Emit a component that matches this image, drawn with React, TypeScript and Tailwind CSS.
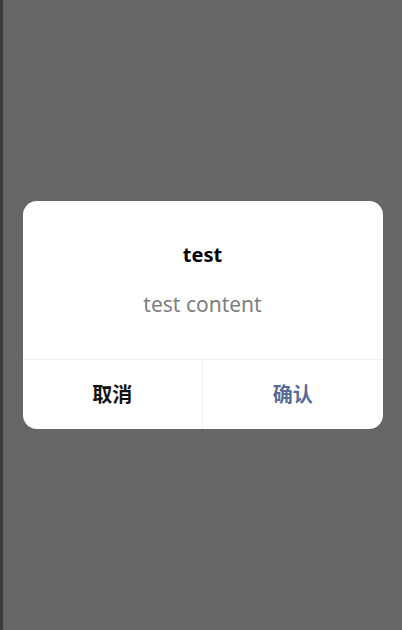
export default function App() {
  return (
    <div
      className="h-[630px] w-full flex items-center justify-center bg-[#666666] border-l-[3px] border-[#3a3a3a]"
      style={{ fontFamily: '"Noto Sans", "Noto Sans CJK SC", sans-serif' }}
    >
      <div className="w-[360px] bg-white rounded-[14px] overflow-hidden">
        {/* Body */}
        <div className="pt-[40px] pb-[40px] px-6 text-center">
          <h2 className="text-[20px] leading-[28px] font-bold text-black">test</h2>
          <p className="mt-[20px] text-[21px] leading-[30px] text-[#808080]">test content</p>
        </div>

        {/* Actions */}
        <div className="flex h-[70px] border-t border-[#f0f0f0]">
          <button className="flex-1 flex items-center justify-center text-[20px] font-bold text-[#111111]">
            取消
          </button>
          <button className="flex-1 flex items-center justify-center text-[20px] font-bold text-[#576b95] border-l border-[#f0f0f0]">
            确认
          </button>
        </div>
      </div>
    </div>
  );
}
